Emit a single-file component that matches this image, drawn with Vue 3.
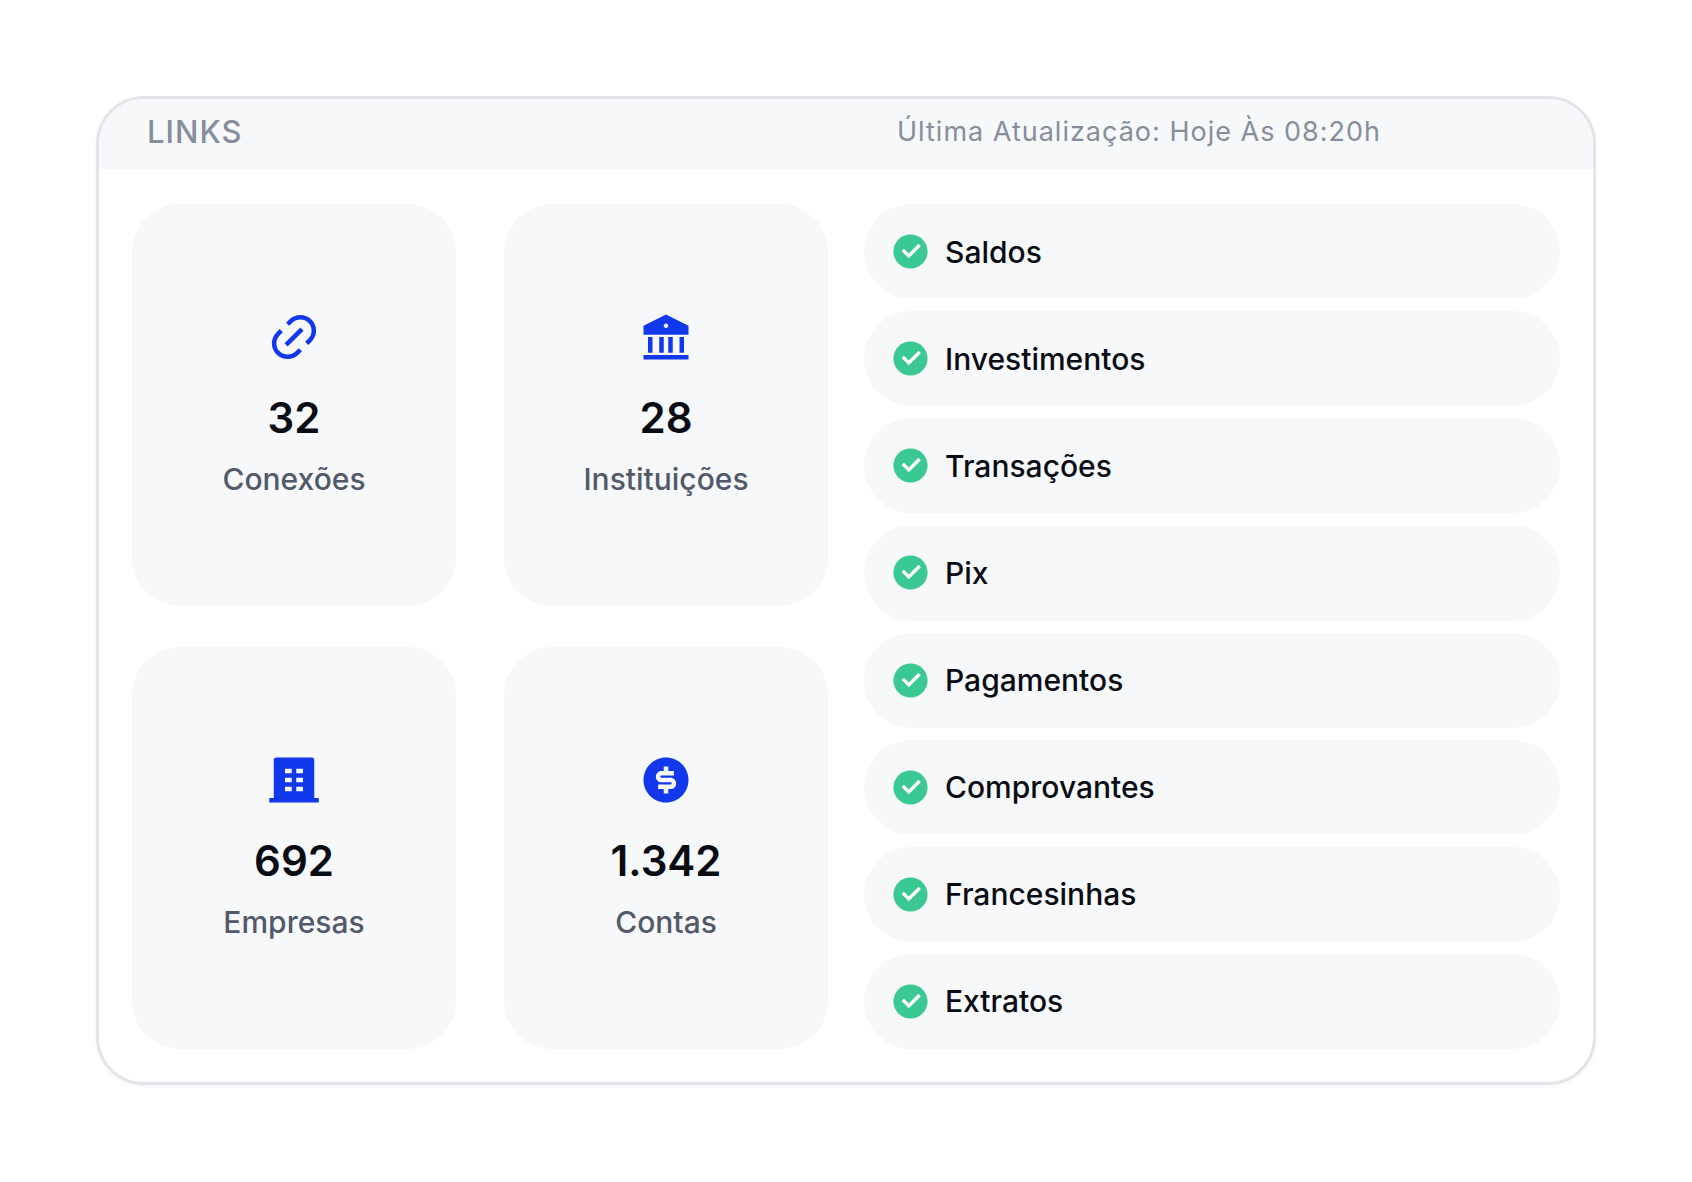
<script setup>
const stats = [
  {
    value: '32',
    label: 'Conexões',
    icon: 'M18.3638 15.5355L16.9496 14.1213L18.3638 12.7071C20.3164 10.7545 20.3164 7.58866 18.3638 5.63604C16.4112 3.68341 13.2453 3.68341 11.2927 5.63604L9.87849 7.05025L8.46428 5.63604L9.87849 4.22183C12.6122 1.48816 17.0443 1.48816 19.778 4.22183C22.5117 6.9555 22.5117 11.3877 19.778 14.1213L18.3638 15.5355ZM15.5353 18.364L14.1211 19.7782C11.3875 22.5118 6.95531 22.5118 4.22164 19.7782C1.48797 17.0445 1.48797 12.6123 4.22164 9.87868L5.63585 8.46447L7.05007 9.87868L5.63585 11.2929C3.68323 13.2455 3.68323 16.4113 5.63585 18.364C7.58847 20.3166 10.7543 20.3166 12.7069 18.364L14.1211 16.9497L15.5353 18.364ZM14.8282 7.75736L16.2425 9.17157L9.17139 16.2426L7.75717 14.8284L14.8282 7.75736Z'
  },
  {
    value: '28',
    label: 'Instituições',
    icon: 'M2 20H22V22H2V20ZM4 12H6V19H4V12ZM9 12H11V19H9V12ZM13 12H15V19H13V12ZM18 12H20V19H18V12ZM2 7L12 2L22 7V11H2V7ZM12 8C12.5523 8 13 7.55228 13 7C13 6.44772 12.5523 6 12 6C11.4477 6 11 6.44772 11 7C11 7.55228 11.4477 8 12 8Z'
  },
  {
    value: '692',
    label: 'Empresas',
    icon: 'M21 20H23V22H1V20H3V3C3 2.44772 3.44772 2 4 2H20C20.5523 2 21 2.44772 21 3V20ZM8 11V13H11V11H8ZM8 7V9H11V7H8ZM8 15V17H11V15H8ZM13 15V17H16V15H13ZM13 11V13H16V11H13ZM13 7V9H16V7H13Z'
  },
  {
    value: '1.342',
    label: 'Contas',
    icon: 'M12.0049 22.0027C6.48204 22.0027 2.00488 17.5256 2.00488 12.0027C2.00488 6.4799 6.48204 2.00275 12.0049 2.00275C17.5277 2.00275 22.0049 6.4799 22.0049 12.0027C22.0049 17.5256 17.5277 22.0027 12.0049 22.0027ZM8.50488 14.0027V16.0027H11.0049V18.0027H13.0049V16.0027H14.0049C15.3856 16.0027 16.5049 14.8835 16.5049 13.5027C16.5049 12.122 15.3856 11.0027 14.0049 11.0027H10.0049C9.72874 11.0027 9.50488 10.7789 9.50488 10.5027C9.50488 10.2266 9.72874 10.0027 10.0049 10.0027H15.5049V8.00275H13.0049V6.00275H11.0049V8.00275H10.0049C8.62417 8.00275 7.50488 9.12203 7.50488 10.5027C7.50488 11.8835 8.62417 13.0027 10.0049 13.0027H14.0049C14.281 13.0027 14.5049 13.2266 14.5049 13.5027C14.5049 13.7789 14.281 14.0027 14.0049 14.0027H8.50488Z'
  }
]

const features = [
  'Saldos',
  'Investimentos',
  'Transações',
  'Pix',
  'Pagamentos',
  'Comprovantes',
  'Francesinhas',
  'Extratos'
]
</script>

<template>
  <main class="page">
    <section class="card">
      <header class="card-header">
        <h1 class="title">LINKS</h1>
        <p class="updated">Última Atualização: Hoje Às 08:20h</p>
      </header>
      <div class="card-body">
        <div class="stats">
          <article v-for="stat in stats" :key="stat.label" class="stat">
            <svg class="stat-icon" viewBox="0 0 24 24" aria-hidden="true">
              <path :d="stat.icon" />
            </svg>
            <strong class="stat-value">{{ stat.value }}</strong>
            <span class="stat-label">{{ stat.label }}</span>
          </article>
        </div>
        <ul class="features">
          <li v-for="feature in features" :key="feature" class="feature">
            <svg class="check" viewBox="0 0 24 24" aria-hidden="true">
              <circle cx="12" cy="12" r="10" fill="#3ac893" />
              <path
                d="M11.0026 16L18.0737 8.92893L16.6595 7.51472L11.0026 13.1716L8.17421 10.3431L6.75999 11.7574L11.0026 16Z"
                fill="#fff"
              />
            </svg>
            <span>{{ feature }}</span>
          </li>
        </ul>
      </div>
    </section>
  </main>
</template>

<style>
body {
  background: #fff;
}
</style>

<style scoped>
.page {
  box-sizing: border-box;
  padding: 96px;
  font-family: Inter, "Liberation Sans", sans-serif;
}

.card {
  overflow: hidden;
  border: 3px solid #e3e4ea;
  border-radius: 48px;
  background: #fff;
  box-shadow: 0 2px 5px rgba(16, 24, 40, 0.04);
}

.card-header {
  box-sizing: border-box;
  display: grid;
  grid-template-columns: 1fr 1fr;
  column-gap: 36px;
  align-items: center;
  min-height: 70px;
  padding: 0 33px 4px;
  background: #f7f8fa;
  color: #868e9b;
}

.title {
  margin: 0;
  padding-left: 15px;
  font-size: 31px;
  font-weight: 500;
  line-height: 36px;
  letter-spacing: 1px;
}

.updated {
  margin: 0;
  padding-left: 33px;
  font-size: 27px;
  font-weight: 400;
  line-height: 36px;
  letter-spacing: 1px;
}

.card-body {
  display: grid;
  grid-template-columns: 1fr 1fr;
  column-gap: 36px;
  padding: 35px 33px 33px;
}

.stats {
  display: grid;
  grid-template-columns: 1fr 1fr;
  grid-auto-rows: 1fr;
  gap: 41px 48px;
}

.stat {
  box-sizing: border-box;
  display: flex;
  flex-direction: column;
  align-items: center;
  justify-content: center;
  min-height: 402px;
  border-radius: 48px;
  background: #f7f8fa;
}

.stat-icon {
  width: 54px;
  height: 54px;
  margin-bottom: 28px;
  fill: #1238ec;
}

.stat-value {
  margin-bottom: 13px;
  color: #0a0c14;
  font-size: 42px;
  font-weight: 600;
  line-height: 52px;
}

.stat-label {
  color: #525a69;
  font-size: 30px;
  font-weight: 500;
  line-height: 44px;
}

.features {
  display: flex;
  flex-direction: column;
  gap: 12px;
  margin: 0;
  padding: 0;
  list-style: none;
}

.feature {
  display: flex;
  flex: 1;
  align-items: center;
  gap: 14px;
  padding: 0 26px;
  border-radius: 48px;
  background: #f7f8fa;
  color: #0a0c14;
  font-size: 30px;
  font-weight: 500;
  line-height: 44px;
}

.check {
  flex: none;
  width: 41px;
  height: 41px;
}
</style>
